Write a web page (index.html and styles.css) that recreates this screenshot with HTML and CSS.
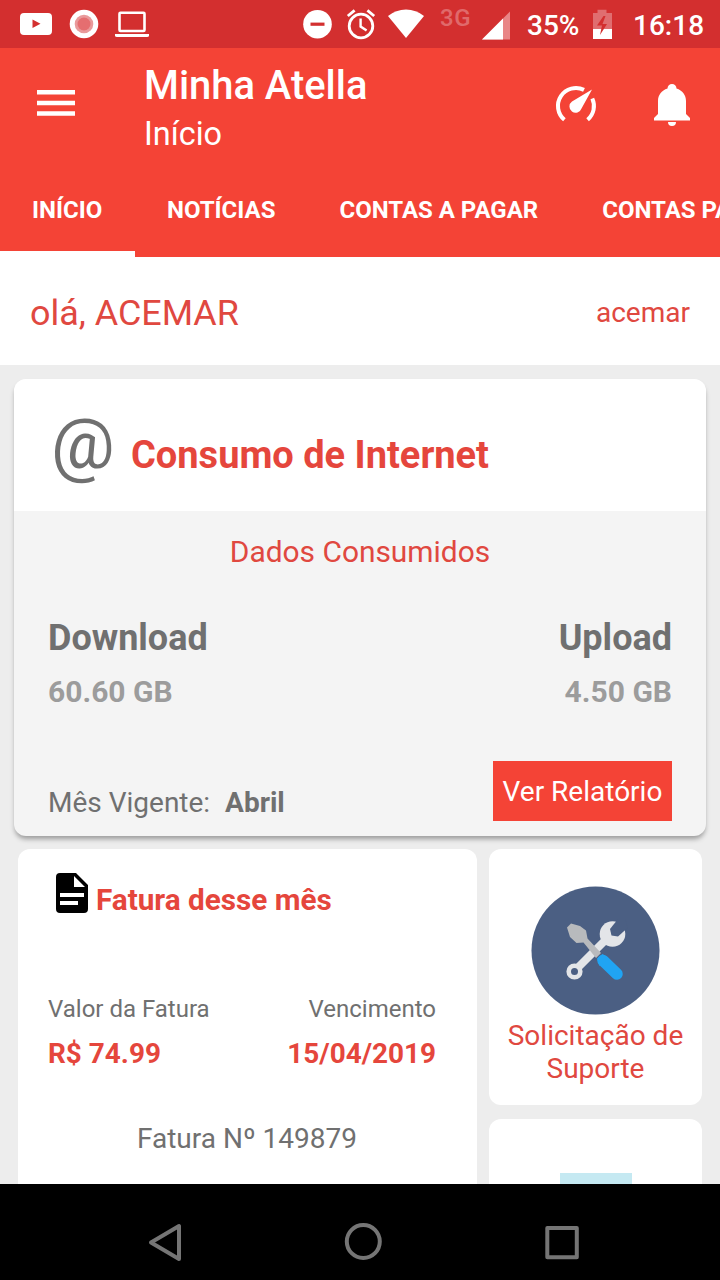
FILE: index.html
```html
<!DOCTYPE html>
<html lang="pt-BR">
<head>
<meta charset="utf-8">
<title>Minha Atella</title>
<link rel="stylesheet" href="styles.css">
</head>
<body>
<div class="screen">
  <div class="status">
    <svg class="status-left" width="150" height="48" viewBox="0 0 150 48">
      <path fill="#fff" fill-rule="evenodd" d="M24 13h24q4 0 4 4v14q0 4-4 4H24q-4 0-4-4V17q0-4 4-4zM32.500 19.500v8.500l8-4.200z"/>
      <circle cx="84" cy="24" r="14.300" fill="#fff"/>
      <circle cx="84" cy="24" r="9.300" fill="#e99a9b"/>
      <circle cx="84" cy="24" r="6.500" fill="#e56e70"/>
      <rect x="119.500" y="12.700" width="25" height="18.300" rx="1" fill="none" stroke="#fff" stroke-width="2.600"/>
      <path fill="#fff" d="M115 34h34v1.500q0 1.500-2 1.500h-30q-2 0-2-1.500z"/>
    </svg>
    <div class="status-right">
      <svg width="136" height="48" viewBox="300 0 136 48">
        <circle cx="317.500" cy="24.200" r="14.300" fill="#fff"/>
        <rect x="310.500" y="22.600" width="14" height="3.200" fill="#d32f2f"/>
        <g fill="none" stroke="#fff" stroke-width="2.800">
          <circle cx="361" cy="26" r="11.800"/>
          <path stroke-width="2.400" d="M360.600 18.500v8l6 4"/>
          <path d="M347.800 16l6.800-5.600M374.200 16l-6.800-5.600"/>
        </g>
        <path fill="#fff" d="M406 38L388 16Q396 9.500 406 9.500T424 16z"/>
      </svg>
      <span class="network">3G</span>
      <svg width="32" height="48" viewBox="480 0 32 48">
        <path fill="#e98586" d="M482 39.500L510 11.500v28z"/>
        <path fill="#fff" d="M482 39.500L503 18.500v21z"/>
      </svg>
      <span class="percent">35%</span>
      <svg width="20" height="48" viewBox="592 0 20 48">
        <path fill="#e06e70" d="M593 13h4.500V9.800h9V13h5.500v26h-19z"/>
        <path fill="#fff" d="M593 29h19v10h-19z"/>
        <path fill="#d32f2f" d="M603.500 16L597 25.500h5L600 35l7-11h-4.500l3-8z"/>
      </svg>
      <span class="clock">16:18</span>
    </div>
  </div>

  <header class="appbar">
    <div class="toolbar">
      <svg class="menu" width="40" height="28" viewBox="0 0 40 28"><path fill="#fff" d="M1 1h38v4.600H1zM1 11.700h38v4.600H1zM1 22.200h38v4.600H1z"/></svg>
      <div class="titles">
        <div class="title">Minha Atella</div>
        <div class="subtitle">Início</div>
      </div>
      <svg class="gauge" width="44" height="44" viewBox="554 82 44 44">
        <path fill="none" stroke="#fff" stroke-width="4" d="M564.400 119.800A18 18 0 0 1 584 89.900M592.300 98.500A18 18 0 0 1 587.600 119.800"/>
        <path fill="#fff" d="M592 89.500L581.500 108.500A6.200 6.200 0 1 1 572 101.500z"/>
      </svg>
      <svg class="bell" width="40" height="48" viewBox="652 81 40 48">
        <path fill="#fff" d="M667.500 88.500a4.500 4.500 0 0 1 9 0C682.500 90.500 686 95 686 101v13l4 4v2.500h-36V118l4-4v-13c0-6 3.500-10.500 9.500-12.500zM668 122h8q0 4-4 4t-4-4z"/>
      </svg>
    </div>
    <nav class="tabs">
      <div class="tab active">INÍCIO</div>
      <div class="tab">NOTÍCIAS</div>
      <div class="tab">CONTAS A PAGAR</div>
      <div class="tab">CONTAS PAGAS</div>
    </nav>
  </header>

  <main class="content">
    <section class="greeting">
      <span class="hello">olá, ACEMAR</span>
      <span class="login">acemar</span>
    </section>

    <section class="usage">
      <div class="usage-head">
        <span class="at">@</span>
        <h2 class="usage-title">Consumo de Internet</h2>
      </div>
      <div class="usage-body">
        <div class="consumed"><span>Dados Consumidos</span></div>
        <div class="row labels"><span>Download</span><span>Upload</span></div>
        <div class="row values"><span>60.60 GB</span><span>4.50 GB</span></div>
        <div class="row month">
          <span class="month-text">Mês Vigente: <b>Abril</b></span>
          <button class="report">Ver Relatório</button>
        </div>
      </div>
    </section>

    <div class="cards">
      <section class="invoice">
        <div class="invoice-head">
          <svg width="32" height="40" viewBox="0 0 32 40">
            <path fill-rule="evenodd" d="M4 0H20L32 12V36q0 4-4 4H4q-4 0-4-4V4Q0 0 4 0zM18 3V14H29zM4 20v4H28v-4zM4 28v4H22v-4z"/>
          </svg>
          <h3 class="invoice-title">Fatura desse mês</h3>
        </div>
        <div class="row captions"><span>Valor da Fatura</span><span>Vencimento</span></div>
        <div class="row amounts"><span>R$ 74.99</span><span>15/04/2019</span></div>
        <div class="number"><span>Fatura Nº 149879</span></div>
      </section>
      <div class="side">
        <section class="tile">
          <svg width="130" height="130" viewBox="530.500 885 130 130">
            <circle cx="595" cy="950.500" r="64" fill="#4b5f83"/>
            <path d="M577 968L605 940" stroke="#e3e5e8" stroke-width="8"/>
            <circle cx="574" cy="971.500" r="5.800" fill="none" stroke="#e3e5e8" stroke-width="4.600"/>
            <circle cx="612" cy="934" r="12.800" fill="#e3e5e8"/>
            <path fill="#4b5f83" d="M617.500 919L609.500 929L611 935.500L617.500 936.500L627 928L625 919z"/>
            <path fill="#b8babd" d="M570.500 923.500L566.500 927.500L569.500 937L576 943L583 942.500L595.500 958L600.500 953L587 938.500L585.500 930.500L579.500 926z"/>
            <path d="M602.500 960.500L616.500 974" stroke="#20a4f3" stroke-width="11.500" stroke-linecap="round"/>
            <path fill="#20a4f3" d="M596.500 958.500L602 954L608 958L599 966z"/>
          </svg>
          <div class="tile-text"><span>Solicitação de</span><br>Suporte</div>
        </section>
        <section class="tile next"><div class="teaser"></div></section>
      </div>
    </div>
  </main>

  <footer class="navbar">
    <svg width="720" height="96" viewBox="0 1184 720 96" fill="none" stroke="#757575" stroke-width="4" stroke-linejoin="round">
      <path d="M179 1226v33l-28-16.500z"/>
      <circle cx="363.300" cy="1241.500" r="16.500"/>
      <rect x="547.300" y="1228" width="29.500" height="29.300"/>
    </svg>
  </footer>
</div>
</body>
</html>
```
FILE: styles.css
```css
* { box-sizing: border-box; }
body { margin: 0; font-family: Roboto, sans-serif; color: #707070; }
h2, h3 { margin: 0; }
svg { display: block; flex: none; }
span { white-space: nowrap; }

.screen { width: 720px; height: 1280px; display: flex; flex-direction: column; overflow: hidden; background: #ededed; }

.status { height: 48px; flex: none; background: #d32f2f; display: flex; justify-content: space-between; color: #fff; }
.status-right { display: flex; width: 420px; line-height: 51px; font-size: 28px; font-weight: 500; }
.network { width: 44px; padding-left: 4px; line-height: 37px; font-size: 24px; letter-spacing: .5px; color: #e06a6b; }
.percent { width: 80px; padding-left: 15px; }
.clock { padding-left: 21px; }

.appbar { height: 209px; flex: none; background: #f44336; color: #fff; }
.toolbar { height: 112px; display: flex; align-items: flex-start; }
.menu { margin: 41px 0 0 36px; }
.titles { margin-left: 68px; width: 410px; padding-top: 14px; }
.title { font-size: 39.9px; font-weight: 500; line-height: 48px; }
.subtitle { font-size: 32.4px; line-height: 48px; }
.gauge { margin-top: 34px; }
.bell { margin: 33px 0 0 54px; }
.tabs { height: 97px; display: flex; overflow: hidden; font-size: 24px; font-weight: 700; line-height: 100px; }
.tab { flex: none; padding: 0 32px; }
.active { width: 135px; border-bottom: 6px solid #fff; }

.content { flex: 1; min-height: 0; overflow: hidden; }
.greeting { height: 108px; background: #fff; padding: 0 30px; display: flex; justify-content: space-between; line-height: 112px; color: #e04840; }
.hello { font-size: 35.9px; line-height: 112px; }
.login { font-size: 28px; }

.usage { margin: 14px 14px 0; height: 457px; border-radius: 12px; background: #f4f4f4; overflow: hidden; box-shadow: 0 4px 5px -1px rgba(0, 0, 0, .35); }
.usage-head { height: 132px; background: #fff; display: flex; padding-left: 37px; line-height: 152px; }
.at { width: 80px; font-size: 71px; line-height: 130px; }
.usage-title { font-size: 38px; color: #e5463c; }
.usage-body { padding: 0 34px; }
.row { display: flex; justify-content: space-between; }
.consumed { text-align: center; font-size: 29.9px; line-height: 82px; color: #e04840; }
.labels { margin-top: 20px; font-size: 36px; font-weight: 700; line-height: 50px; }
.values { margin-top: 4px; font-size: 30px; font-weight: 700; line-height: 50px; color: #9c9c9c; }
.month { margin-top: 44px; font-size: 28px; }
.month-text { line-height: 60px; padding-top: 12px; }
.month-text b { margin-left: 8px; }
.report { width: 179px; height: 60px; border: 0; padding: 1px 0 0; background: #f44336; color: #fff; font: 28px/59px Roboto, sans-serif; white-space: nowrap; }

.cards { display: flex; gap: 12px; margin: 13px 18px 0; }
.invoice { width: 459px; height: 400px; border-radius: 12px; background: #fff; padding: 24px 41px 0 30px; }
.invoice-head { display: flex; gap: 8px; padding-left: 8px; }
.invoice-title { font-size: 29.7px; line-height: 54px; color: #e5463c; }
.captions { margin-top: 62px; font-size: 24px; line-height: 40px; }
.amounts { margin-top: 5px; font-size: 27.9px; font-weight: 700; line-height: 40px; color: #e5463c; }
.number { margin: 45px -10px 0 0; text-align: center; font-size: 28px; line-height: 40px; }
.side { width: 213px; display: flex; flex-direction: column; gap: 14px; }
.tile { height: 256px; border-radius: 12px; background: #fff; padding-top: 36px; display: flex; flex-direction: column; align-items: center; }
.tile-text { margin-top: 4px; font-size: 28px; line-height: 33px; text-align: center; color: #e04840; }
.next { padding-top: 54px; }
.teaser { width: 72px; height: 72px; background: #c5e9f2; }

.navbar { height: 96px; flex: none; background: #000; }
```
